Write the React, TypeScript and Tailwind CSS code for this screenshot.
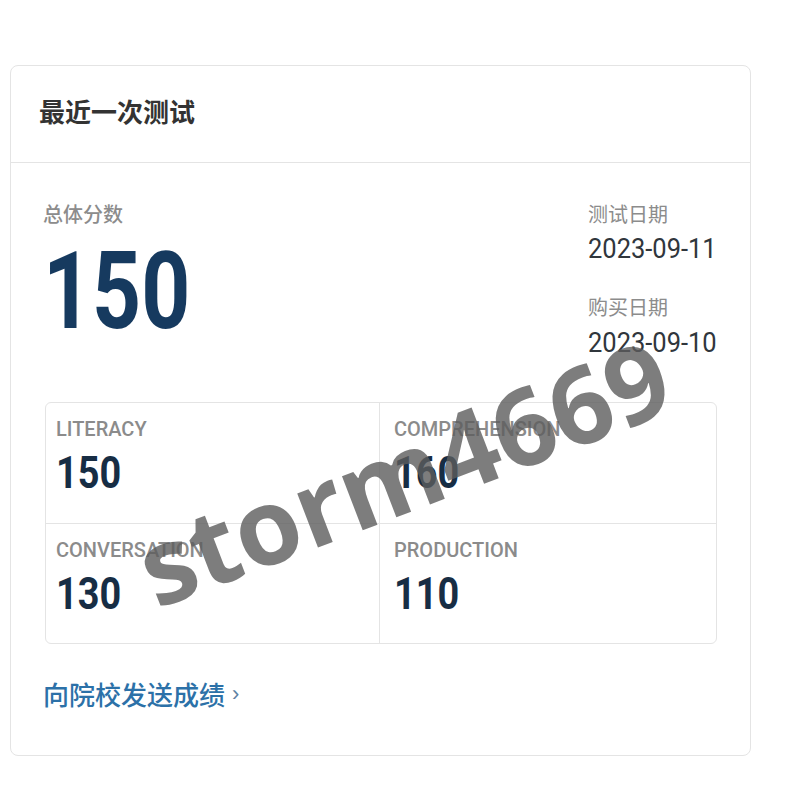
import React from "react";

const cells = [
  { label: "LITERACY", value: "150", left: true, top: true },
  { label: "COMPREHENSION", value: "160", left: false, top: true },
  { label: "CONVERSATION", value: "130", left: true, top: false },
  { label: "PRODUCTION", value: "110", left: false, top: false },
];

export default function App() {
  return (
    <div className="relative w-[800px] h-[800px] bg-white overflow-hidden pt-[65px] pl-[10px] font-['Roboto','Noto_Sans_CJK_SC',sans-serif]">
      <div className="w-[741px] border border-[#e4e4e4] rounded-[8px] bg-white">
        {/* header */}
        <div className="h-[97px] border-b border-[#e4e4e4] pl-[28px] pt-[27px]">
          <div className="text-[26px] leading-[36px] font-semibold text-[#333] font-['Noto_Sans_CJK_SC',sans-serif]">
            最近一次测试
          </div>
        </div>

        {/* body */}
        <div className="pt-[37px] pl-[32px] pr-[33px] pb-[43px]">
          <div className="flex items-start">
            <div className="flex-1">
              <div className="text-[20px] leading-[28px] font-medium text-[#8c8c8c] font-['Noto_Sans_CJK_SC',sans-serif]">
                总体分数
              </div>
              <div className="mt-[10px] h-[107px] text-[107px] leading-[107px] font-bold text-[#163a5f] whitespace-nowrap">
                <span className="inline-block origin-left scale-x-[0.8]">150</span>
              </div>
            </div>
            <div className="w-[129px]">
              <div className="text-[20px] leading-[28px] text-[#8c8c8c] font-['Noto_Sans_CJK_SC',sans-serif]">
                测试日期
              </div>
              <div className="mt-[7px] h-[28px] text-[28px] leading-[28px] text-[#30363c] whitespace-nowrap">
                <span className="inline-block origin-left scale-x-[0.91]">2023-09-11</span>
              </div>
              <div className="mt-[30px] text-[20px] leading-[28px] text-[#8c8c8c] font-['Noto_Sans_CJK_SC',sans-serif]">
                购买日期
              </div>
              <div className="mt-[8px] h-[28px] text-[28px] leading-[28px] text-[#30363c] whitespace-nowrap">
                <span className="inline-block origin-left scale-x-[0.91]">2023-09-10</span>
              </div>
            </div>
          </div>

          {/* scores grid */}
          <div className="mt-[45px] ml-[2px] w-[672px] border border-[#e4e4e4] rounded-[6px] grid grid-cols-[334px_1fr]">
            {cells.map((c) => (
              <div
                key={c.label}
                className={
                  (c.top ? "h-[121px] border-b border-[#e4e4e4] " : "h-[119px] ") +
                  (c.left ? "border-r border-[#e4e4e4] pl-[10px] " : "pl-[14px] ") +
                  "pt-[16px]"
                }
              >
                <div className="text-[20px] leading-[20px] font-medium text-[#8b8b8b] whitespace-nowrap">
                  {c.label}
                </div>
                <div className="mt-[12px] h-[44px] text-[44px] leading-[44px] font-bold text-[#172d44] whitespace-nowrap">
                  <span className="inline-block origin-left scale-x-[0.86]">{c.value}</span>
                </div>
              </div>
            ))}
          </div>

          {/* link */}
          <div className="mt-[32px] flex items-center h-[36px]">
            <span className="text-[26px] leading-[36px] font-medium text-[#2c71a8] font-['Noto_Sans_CJK_SC',sans-serif]">
              向院校发送成绩
            </span>
            <span className="ml-[7px] text-[22px] leading-[36px] text-[#5f82a3] font-['Liberation_Sans',sans-serif]">
              ›
            </span>
          </div>
        </div>
      </div>

      {/* watermark */}
      <div className="absolute left-[403px] top-[471px] -translate-x-1/2 -translate-y-1/2 -rotate-[21deg] whitespace-nowrap text-[106px] leading-none font-bold text-[#5c5c5c]/80 font-['Open_Sans',sans-serif] pointer-events-none">
        storm4669
      </div>
    </div>
  );
}
